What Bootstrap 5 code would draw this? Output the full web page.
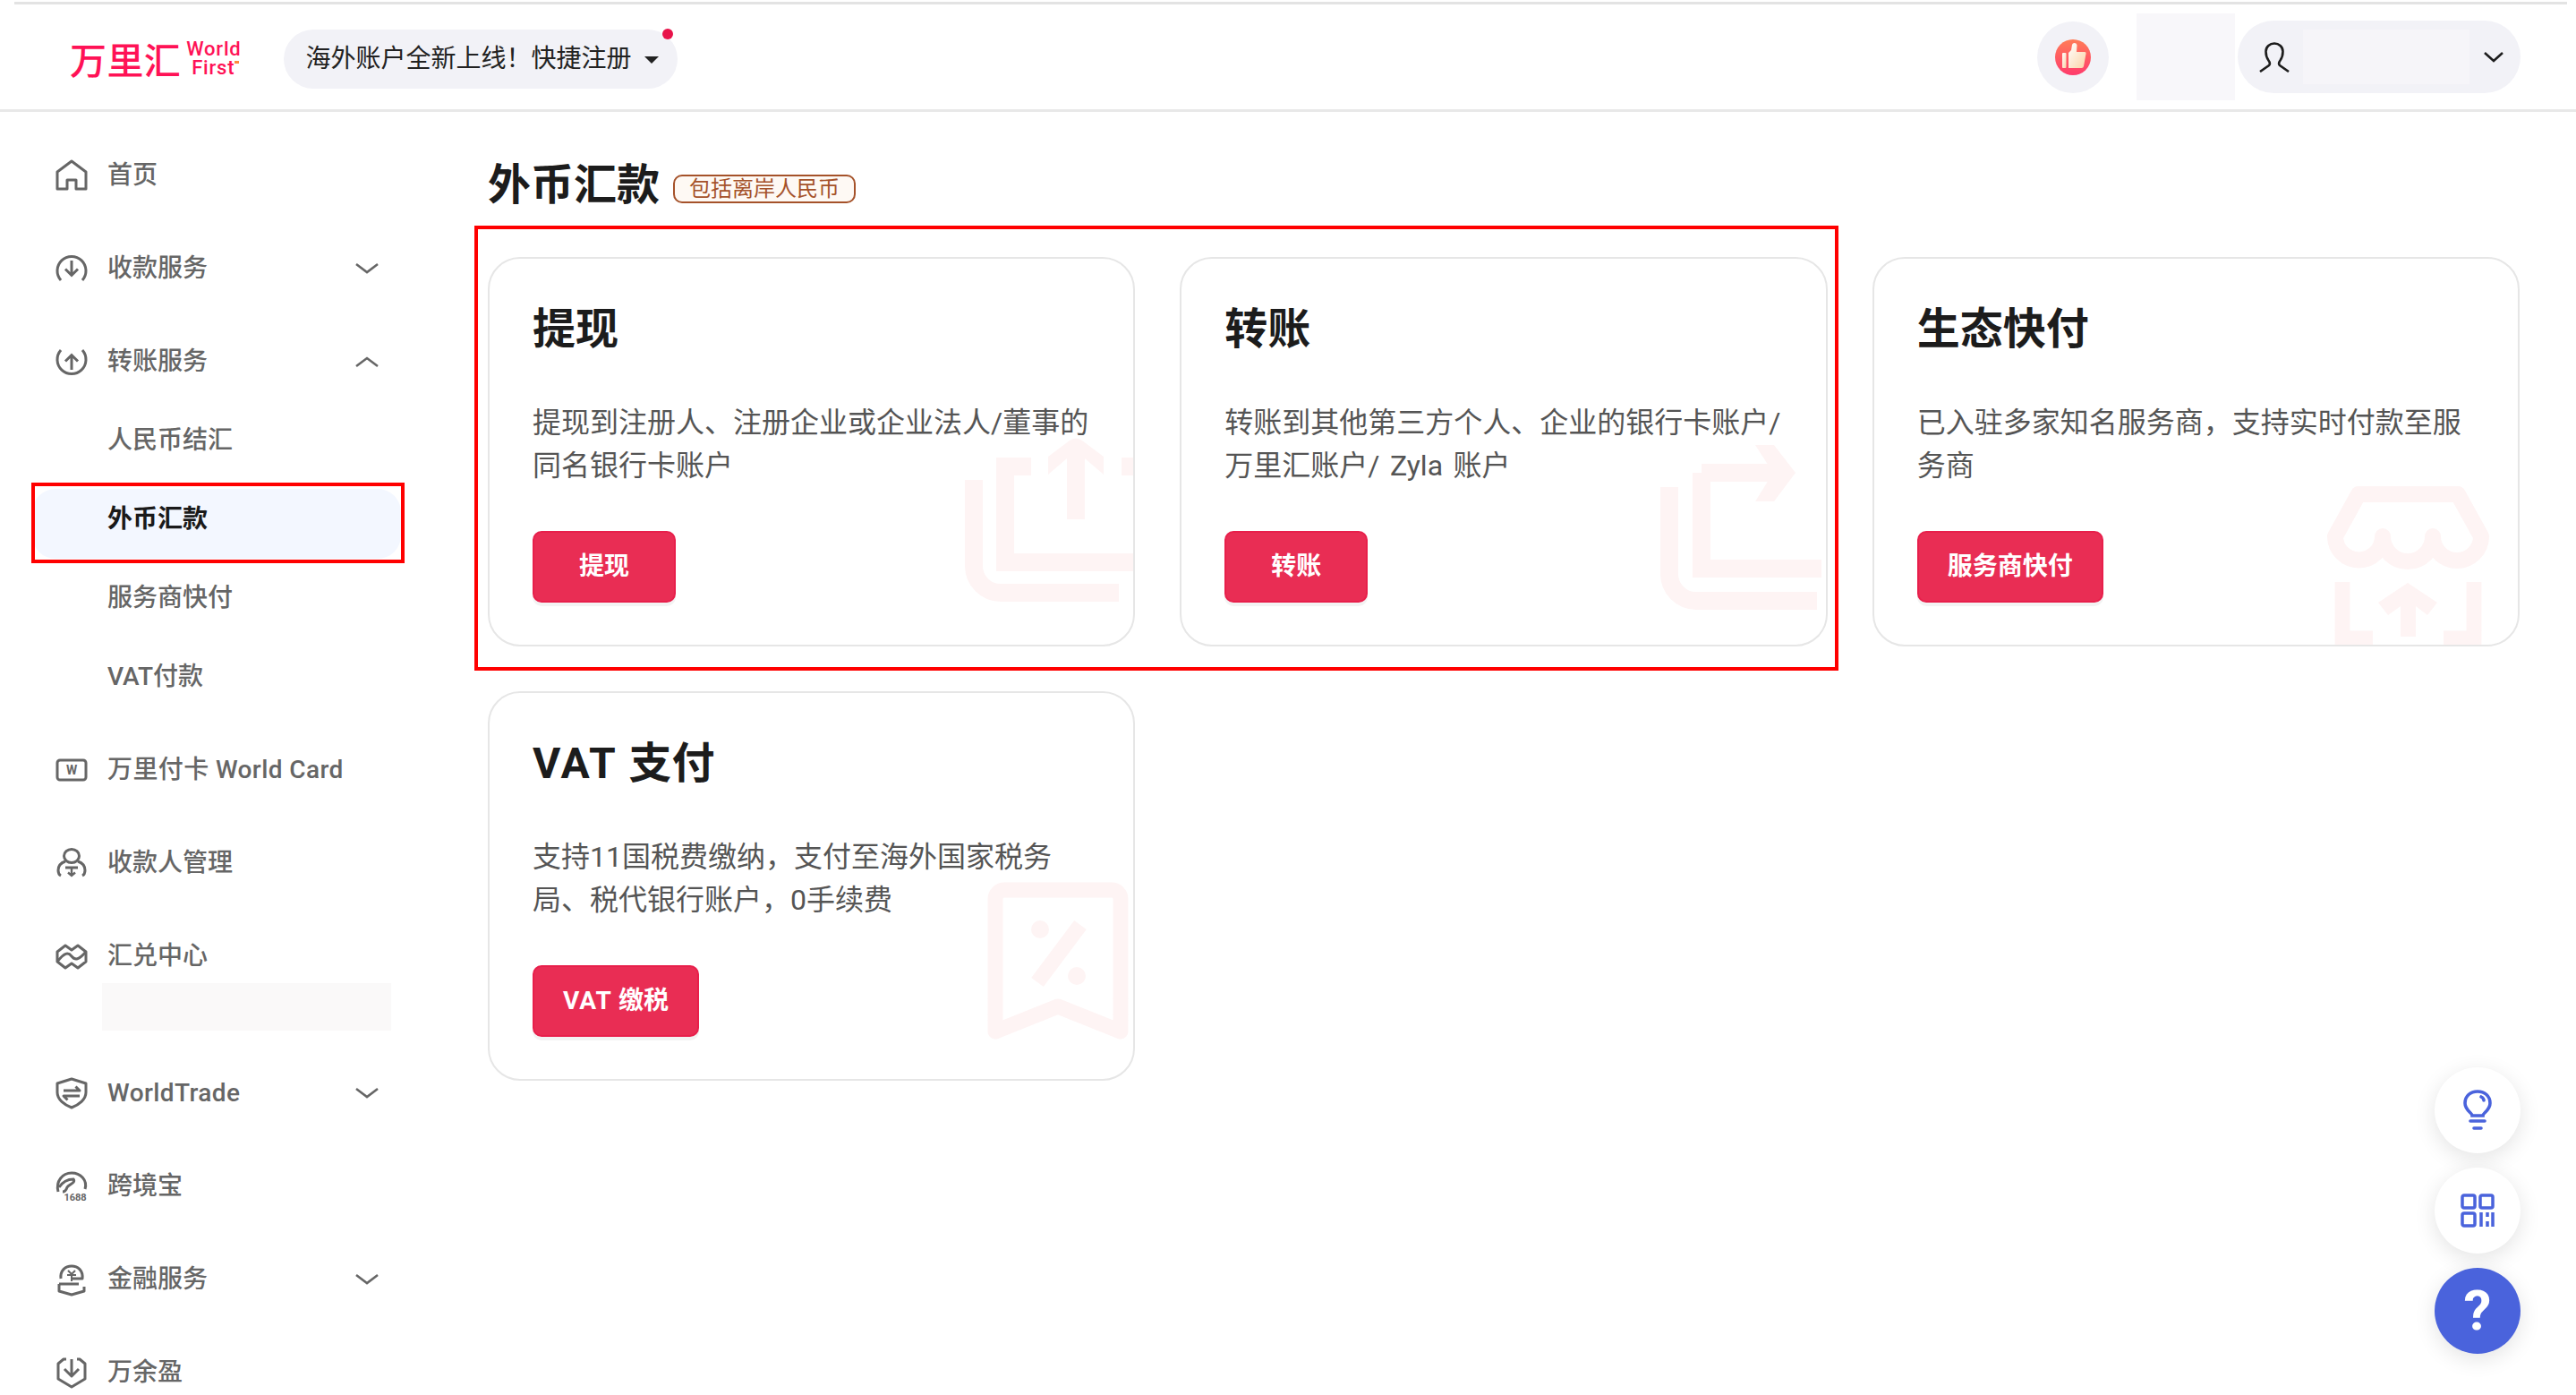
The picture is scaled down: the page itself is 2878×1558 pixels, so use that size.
<!DOCTYPE html>
<html lang="zh-CN">
<head>
    <meta charset="UTF-8">
    <meta name="viewport" content="width=device-width, initial-scale=1.0">
    <title>外币汇款</title>
    <link href="https://cdn.jsdelivr.net/npm/bootstrap@5.3.0/dist/css/bootstrap.min.css" rel="stylesheet">
    <style>
        body {
            font-family: Roboto, "Noto Sans CJK SC", sans-serif;
            background: #fff;
            height: 1558px;
            overflow: hidden;
            position: relative;
        }
        .top-rule {
            height: 3px;
            margin: 2px 10px 0 16px;
            background: #e3e3e3;
        }
        .top-bar {
            height: 120px;
            padding: 0 62px 0 78px;
            border-bottom: 3px solid #e8e8e8;
        }
        .brand-box { margin-top: 3px; }
        .brand-cn {
            font-family: "Noto Sans CJK SC", sans-serif;
            font-size: 41px;
            line-height: 40px;
            font-weight: 500;
            color: #ff1256;
            letter-spacing: .4px;
        }
        .brand-en {
            position: relative;
            font-size: 22px;
            line-height: 21px;
            font-weight: 500;
            color: #ff1256;
            margin-left: 6px;
            letter-spacing: .8px;
        }
        .brand-en span { display: block; }
        .brand-en span + span { padding-left: 6px; }
        .brand-en::after {
            content: "";
            position: absolute;
            right: 3px;
            top: 24px;
            width: 5px;
            height: 3px;
            background: #ff8a3c;
        }
        .notice-pill {
            position: relative;
            margin: 4px 0 0 47px;
            height: 66px;
            padding: 0 21px 0 25px;
            border: 0;
            background: #f2f2f7;
            font-size: 28px;
            line-height: 66px;
            color: #222;
        }
        .notice-pill:hover, .notice-pill:active { background: #f2f2f7; color: #222; }
        .notice-pill::after { margin-left: 14px; vertical-align: .12em; }
        .notice-dot {
            position: absolute;
            top: -1px;
            right: 5px;
            width: 12px;
            height: 12px;
            border-radius: 50%;
            background: #e8134a;
        }
        .thumb-wrap {
            width: 80px;
            height: 80px;
            background: #f2f2f7;
        }
        .blur-box {
            width: 110px;
            height: 97px;
            margin-left: 31px;
            margin-right: 3px;
            background: #f8f7fa;
        }
        .user-pill {
            width: 316px;
            height: 81px;
            background: #f2f2f7;
            padding: 0 18px 0 24px;
        }
        .user-blur {
            width: 186px;
            height: 61px;
            margin-left: 15px;
            background: #f6f5f9;
        }
        .side-col {
            width: 530px;
            flex: none;
            padding-top: 19px;
        }
        .side-link {
            height: 104px;
            padding: 0 106px 0 62px;
            font-size: 28px;
            color: #666;
            font-weight: 500;
            text-decoration: none;
        }
        .side-link:hover { color: #666; }
        .side-link > svg:first-child { width: 36px; height: 36px; margin-right: 22px; flex: none; overflow: visible; }
        .side-chev { width: 28px; height: 28px; margin-left: auto; }
        .latin-gap { letter-spacing: .4px; white-space: pre; }
        .sub-list { margin: -8px 0 8px; }
        .sub-link {
            position: relative;
            height: 88px;
            padding-left: 120px;
            font-size: 28px;
            color: #666;
            font-weight: 500;
            text-decoration: none;
        }
        .sub-link:hover { color: #666; }
        .sub-active { color: #1a1a1a; font-weight: 700; }
        .sub-active:hover { color: #1a1a1a; }
        .sub-active::before {
            content: "";
            position: absolute;
            left: 36px;
            top: 10px;
            width: 412px;
            height: 78px;
            border-radius: 26px;
            background: #f3f7ff;
            z-index: -1;
        }
        .sub-active::after {
            content: "";
            position: absolute;
            left: 35px;
            top: 3px;
            width: 417px;
            height: 90px;
            border: 4px solid #f00;
        }
        .side-blur {
            height: 53px;
            margin: -22px 93px 18px 114px;
            background: #faf9f9;
        }
        .main-col {
            flex: 1;
            padding: 50px 63px 0 15px;
        }
        .page-title {
            font-size: 48px;
            line-height: 64px;
            font-weight: 700;
            color: #1c1c1c;
            margin: 0;
        }
        .title-tag {
            height: 32px;
            margin: 8px 0 0 15px;
            padding: 0 16px;
            border: 2px solid #a5522a;
            border-radius: 10px;
            background: #fef9f4;
            color: #a5522a;
            font-size: 24px;
            line-height: 28px;
        }
        .card-area {
            position: relative;
            margin-top: 48px;
        }
        .card-area .row {
            --bs-gutter-x: 50px;
            --bs-gutter-y: 50px;
        }
        .red-frame {
            position: absolute;
            left: -15px;
            top: 15px;
            width: 1524px;
            height: 497px;
            border: 4px solid #f00;
            pointer-events: none;
        }
        .pay-card {
            height: 435px;
            border: 2px solid #e6e6e6;
            border-radius: 36px;
            overflow: hidden;
        }
        .pay-mark {
            position: absolute;
            left: -2px;
            top: -2px;
            width: 724px;
            height: 435px;
            fill: none;
            stroke: #fef4f4;
            stroke-width: 20;
        }
        .pay-mark .solid { fill: #fef4f4; stroke: none; }
        .pay-body {
            position: relative;
            padding: 51px 48px 50px;
        }
        .pay-title {
            font-size: 48px;
            line-height: 56px;
            font-weight: 700;
            color: #1c1c1c;
            margin: 0 0 52px;
        }
        .pay-title .latin-wide { letter-spacing: 2px; }
        .pay-text {
            font-size: 32px;
            line-height: 48px;
            color: #555;
            height: 96px;
            margin: 0 0 49px;
            word-spacing: 3.500px;
        }
        .pay-btn {
            min-width: 160px;
            height: 80px;
            padding: 0 32px;
            border: 2px solid #e81f4b;
            border-radius: 10px;
            background: #e92d54;
            color: #fff;
            font-size: 28px;
            font-weight: 700;
            line-height: 74px;
            box-shadow: 0 4px 0 #f3f3f3;
        }
        .pay-btn .latin-wide { letter-spacing: 1px; }
        .pay-btn:hover { background: #e92d54; color: #fff; border-color: #e81f4b; }
        .float-stack {
            position: absolute;
            right: 62px;
            top: 1192px;
        }
        .float-btn {
            width: 96px;
            height: 96px;
            background: #fff;
            box-shadow: 0 6px 24px rgba(0, 0, 0, .11);
        }
        .float-blue {
            background: #4a63dc;
            color: #fff;
            font-size: 62px;
            font-weight: 700;
            line-height: 1;
        }
    </style>
</head>
<body>
    <div class="top-rule"></div>
    <header class="top-bar d-flex align-items-center">
        <div class="brand-box d-flex align-items-center">
            <span class="brand-cn">万里汇</span>
            <span class="brand-en"><span>World</span><span>First</span></span>
        </div>
        <button class="btn rounded-pill dropdown-toggle notice-pill" type="button">海外账户全新上线！快捷注册<span class="notice-dot"></span></button>
        <div class="ms-auto d-flex align-items-center">
            <div class="thumb-wrap rounded-circle d-flex align-items-center justify-content-center">
                <svg width="40" height="40" viewBox="0 0 40 40">
                    <defs>
                        <linearGradient id="thumbBg" x1="0" y1="0" x2="0" y2="1"><stop offset="0" stop-color="#ff7d58"/><stop offset="1" stop-color="#ff3b6c"/></linearGradient>
                        <linearGradient id="thumbFg" x1="0" y1="0" x2="1" y2="1"><stop offset="0" stop-color="#fff"/><stop offset="1" stop-color="#fbd3a6"/></linearGradient>
                    </defs>
                    <circle cx="20" cy="20" r="20" fill="url(#thumbBg)"/>
                    <rect x="8" y="15" width="4.500" height="17" rx="1" fill="url(#thumbFg)"/>
                    <path d="M15 15 L18 12 L19 6 a2.800 2.800 0 0 1 5.500 .5 L24 14 H33 a1.500 1.500 0 0 1 1.500 2 L32 30 a2.500 2.500 0 0 1 -2.500 2 H15 Z" fill="url(#thumbFg)"/>
                </svg>
            </div>
            <div class="blur-box"></div>
            <div class="user-pill rounded-pill d-flex align-items-center">
                <svg width="34" height="34" viewBox="0 0 34 34" fill="none" stroke="#1d1d1d" stroke-width="2.600">
                    <path d="M1 33 L11 26 C13 24 12 22.500 10.500 20.500 C8 17 7.500 13 7.500 10.500 C7.500 5 12 1.500 17 1.500 C22 1.500 26.500 5 26.500 10.500 C26.500 13 26 17 23.500 20.500 C22 22.500 21 24 23 26 L33 33"/>
                </svg>
                <div class="user-blur"></div>
                <svg class="ms-auto" width="24" height="24" viewBox="0 0 24 24" fill="none" stroke="#1d1d1d" stroke-width="2.600"><path d="M2 7 L12 16 L22 7"/></svg>
            </div>
        </div>
    </header>

    <div class="d-flex">
        <!-- menu -->
        <nav class="side-col nav flex-column flex-nowrap">
            <a class="side-link d-flex align-items-center" href="#">
                <svg viewBox="0 0 36 36" fill="none" stroke="#666" stroke-width="3" stroke-linejoin="round"><path d="M2 33 V14 L18 2 L34 14 V33 H23 V23 H13 V33 Z"/></svg>首页
            </a>
            <a class="side-link d-flex align-items-center" href="#">
                <svg viewBox="0 0 36 36" fill="none" stroke="#666" stroke-width="3"><path d="M6 31 A16 16 0 1 1 30 31"/><path d="M18 9 V25 M11 18.500 L18 25.500 L25 18.500"/></svg>收款服务
                <svg class="side-chev" viewBox="0 0 28 28" fill="none" stroke="#666" stroke-width="2.600"><path d="M2 9 L14 18 L26 9"/></svg>
            </a>
            <a class="side-link d-flex align-items-center" href="#">
                <svg viewBox="0 0 36 36" fill="none" stroke="#666" stroke-width="3"><path d="M6 5 A16 16 0 1 0 30 5"/><path d="M18 27 V11 M11 17.500 L18 10.500 L25 17.500"/></svg>转账服务
                <svg class="side-chev" viewBox="0 0 28 28" fill="none" stroke="#666" stroke-width="2.600"><path d="M2 19 L14 10 L26 19"/></svg>
            </a>
            <div class="sub-list d-flex flex-column">
                <a class="sub-link d-flex align-items-center" href="#">人民币结汇</a>
                <a class="sub-link sub-active d-flex align-items-center" href="#">外币汇款</a>
                <a class="sub-link d-flex align-items-center" href="#">服务商快付</a>
                <a class="sub-link d-flex align-items-center" href="#">VAT付款</a>
            </div>
            <a class="side-link d-flex align-items-center" href="#">
                <svg viewBox="0 0 36 36" fill="none" stroke="#666" stroke-width="3"><rect x="2" y="7" width="32" height="22" rx="3"/><text x="18" y="23" text-anchor="middle" font-family="Roboto" font-size="14" font-weight="700" fill="#666" stroke="none">W</text></svg><span class="latin-gap">万里付卡 World Card</span>
            </a>
            <a class="side-link d-flex align-items-center" href="#">
                <svg viewBox="0 0 36 36" fill="none" stroke="#666" stroke-width="3"><ellipse cx="18" cy="10" rx="8.500" ry="7.500"/><path d="M11 16 C5 18 3 22 3 26 C3 29 4 31 6 32 M25 16 C31 18 33 22 33 26 C33 29 32 31 30 32 M11 23 H25"/><path d="M18 24 V32 M14 28.500 L18 32 L22 28.500" stroke-width="2.400"/></svg>收款人管理
            </a>
            <a class="side-link d-flex align-items-center" href="#">
                <svg viewBox="0 0 36 36" fill="none" stroke="#666" stroke-width="3" stroke-linejoin="round"><path d="M2 24 V13 L11 6 L18 11 L25 6 L34 13 V24 L25 31 L18 26 L11 31 Z"/><path d="M2 24 C10 14 14 13 18 18 C22 23 26 22 34 13"/></svg>汇兑中心
            </a>
            <div class="side-blur"></div>
            <a class="side-link d-flex align-items-center" href="#">
                <svg viewBox="0 0 36 36" fill="none" stroke="#666" stroke-width="3" stroke-linejoin="round"><path d="M18 2 L34 7 V17 C34 25 26 31 18 34 C10 31 2 25 2 17 V7 Z"/><path d="M9 15 H27 L22.500 10.500 M27 21 H9 L13.500 25.500"/></svg><span class="latin-gap">WorldTrade</span>
                <svg class="side-chev" viewBox="0 0 28 28" fill="none" stroke="#666" stroke-width="2.600"><path d="M2 9 L14 18 L26 9"/></svg>
            </a>
            <a class="side-link d-flex align-items-center" href="#">
                <svg viewBox="0 0 36 36" fill="none" stroke="#666" stroke-width="3"><path d="M3 24 C0 12 8 3 18 3 C28 3 36 11 33 21 M4 19 C8 13 14 10 20 10 C23 14 15 16 13 19 C12 22 10 24 8 24"/><text x="22" y="34" text-anchor="middle" font-family="Roboto" font-size="11" font-weight="700" fill="#666" stroke="none">1688</text></svg>跨境宝
            </a>
            <a class="side-link d-flex align-items-center" href="#">
                <svg viewBox="0 0 36 36" fill="none" stroke="#666" stroke-width="3" stroke-linejoin="round"><path d="M6 17 C5 8 11 3 18 3 C25 3 31 8 30 17 H17 M4 23 H26 M4 23 V31 L18 35 L32 31 V26"/><path d="M14 8 L18 12 L22 8 M13 13 H23 M18 12 V20" stroke-width="2"/></svg>金融服务
                <svg class="side-chev" viewBox="0 0 28 28" fill="none" stroke="#666" stroke-width="2.600"><path d="M2 9 L14 18 L26 9"/></svg>
            </a>
            <a class="side-link d-flex align-items-center" href="#">
                <svg viewBox="0 0 36 36" fill="none" stroke="#666" stroke-width="3" stroke-linejoin="round"><path d="M12 3 H9 L3 8 V25 L18 34 L33 25 V8 L27 3 H24"/><path d="M18 3 V21 M10 14 L18 22 L26 14"/></svg>万余盈
            </a>
        </nav>

        <!-- content -->
        <main class="main-col">
            <div class="d-flex align-items-center">
                <h1 class="page-title">外币汇款</h1>
                <span class="title-tag d-inline-flex align-items-center">包括离岸人民币</span>
            </div>
            <div class="card-area">
                <div class="row row-cols-3">
                    <div class="col">
                        <div class="card pay-card">
                            <svg class="pay-mark" viewBox="0 0 724 435">
                                <path d="M543 249 V345 a30 30 0 0 0 30 30 H705"/>
                                <path d="M607 234 H578 V341 H724 M708 234 H730"/>
                                <path class="solid" d="M626 243 V223 L650 205 Q657 200 664 205 L688 223 V243 L667 225 V293 H647 V225 Z"/>
                            </svg>
                            <div class="pay-body">
                                <h2 class="pay-title">提现</h2>
                                <p class="pay-text">提现到注册人、注册企业或企业法人/董事的同名银行卡账户</p>
                                <button class="btn pay-btn" type="button">提现</button>
                            </div>
                        </div>
                    </div>
                    <div class="col">
                        <div class="card pay-card">
                            <svg class="pay-mark" viewBox="0 0 724 435">
                                <path d="M547 257 V354 a30 30 0 0 0 30 30 H712"/>
                                <path d="M583 241 H668 M583 241 V348 H717"/>
                                <path class="solid" d="M643 210 H664 L688 241 L664 273 H643 L663 241 Z"/>
                            </svg>
                            <div class="pay-body">
                                <h2 class="pay-title">转账</h2>
                                <p class="pay-text">转账到其他第三方个人、企业的银行卡账户/ 万里汇账户/ Zyla 账户</p>
                                <button class="btn pay-btn" type="button">转账</button>
                            </div>
                        </div>
                    </div>
                    <div class="col">
                        <div class="card pay-card">
                            <svg class="pay-mark" viewBox="0 0 724 435">
                                <path d="M543 265 H654 L680 312 A26 26 0 0 1 626 312 A28 28 0 0 1 570 312 A26.500 26.500 0 0 1 517 312 Z" stroke-width="18" stroke-linejoin="round"/>
                                <path d="M525 363 V426 H559 M672 363 V426 H638" stroke-width="17"/>
                                <path class="solid" d="M565 386 L598 364 L631 386 L620 400 L607 390 V424 H590 V390 L576 400 Z"/>
                            </svg>
                            <div class="pay-body">
                                <h2 class="pay-title">生态快付</h2>
                                <p class="pay-text">已入驻多家知名服务商，支持实时付款至服务商</p>
                                <button class="btn pay-btn" type="button">服务商快付</button>
                            </div>
                        </div>
                    </div>
                    <div class="col">
                        <div class="card pay-card">
                            <svg class="pay-mark" viewBox="0 0 724 435">
                                <path d="M567 232 a10 10 0 0 1 10 -10 H697 a10 10 0 0 1 10 10 V380 L637 352 L567 380 Z" stroke-width="17" stroke-linejoin="round"/>
                                <circle class="solid" cx="617" cy="266" r="10"/>
                                <circle class="solid" cx="658" cy="318" r="10"/>
                                <path d="M662 261 L614 325" stroke-width="17"/>
                            </svg>
                            <div class="pay-body">
                                <h2 class="pay-title"><span class="latin-wide">VAT </span>支付</h2>
                                <p class="pay-text">支持11国税费缴纳，支付至海外国家税务局、税代银行账户，0手续费</p>
                                <button class="btn pay-btn" type="button"><span class="latin-wide">VAT </span>缴税</button>
                            </div>
                        </div>
                    </div>
                </div>
                <div class="red-frame"></div>
            </div>
        </main>
    </div>

    <div class="float-stack d-flex flex-column gap-3">
        <div class="float-btn rounded-circle d-flex align-items-center justify-content-center">
            <svg width="32" height="46" viewBox="0 0 32 46" fill="none" stroke="#4a63dc" stroke-width="3.600" stroke-linecap="round">
                <path d="M10 29 C10 26 2 23 2 15 C2 7 8 2 16 2 C24 2 30 7 30 15 C30 23 22 26 22 29 Z"/>
                <path d="M20 8 C22 9 23 11 23 12 M8 35 H24 M12 43 H20" />
            </svg>
        </div>
        <div class="float-btn rounded-circle d-flex align-items-center justify-content-center">
            <svg width="38" height="38" viewBox="0 0 38 38" fill="none" stroke="#4a63dc" stroke-width="3.500">
                <rect x="2" y="2" width="14" height="14" rx="2"/><rect x="22" y="2" width="14" height="14" rx="2"/><rect x="2" y="22" width="14" height="14" rx="2"/>
                <path d="M23 21 V37 M30 21 V26 M30 31 V37 M36 21 V37"/>
            </svg>
        </div>
        <div class="float-btn float-blue rounded-circle d-flex align-items-center justify-content-center">?</div>
    </div>

    <script src="https://cdn.jsdelivr.net/npm/bootstrap@5.3.0/dist/js/bootstrap.bundle.min.js"></script>
</body>
</html>
